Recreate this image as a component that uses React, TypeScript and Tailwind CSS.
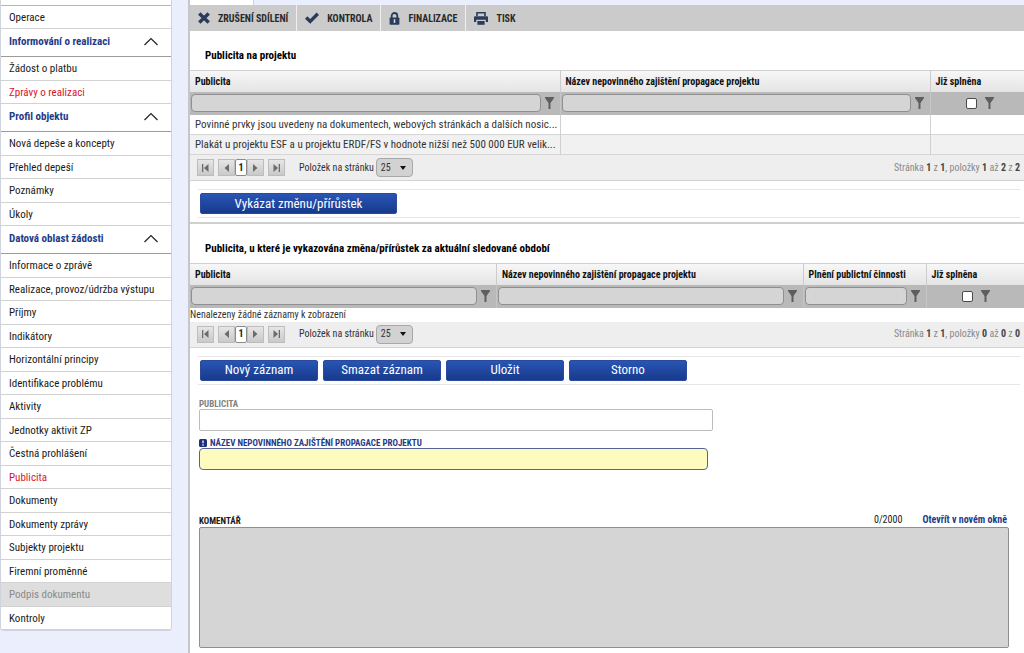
import type { ReactNode } from "react";

type NavItem = { label: string; state?: "active" | "disabled" };
type NavGroup = { title: string; items: NavItem[] };

const groups: NavGroup[] = [
  {
    title: "Informování o realizaci",
    items: [{ label: "Žádost o platbu" }, { label: "Zprávy o realizaci", state: "active" }],
  },
  {
    title: "Profil objektu",
    items: [
      { label: "Nová depeše a koncepty" },
      { label: "Přehled depeší" },
      { label: "Poznámky" },
      { label: "Úkoly" },
    ],
  },
  {
    title: "Datová oblast žádosti",
    items: [
      { label: "Informace o zprávě" },
      { label: "Realizace, provoz/údržba výstupu" },
      { label: "Příjmy" },
      { label: "Indikátory" },
      { label: "Horizontální principy" },
      { label: "Identifikace problému" },
      { label: "Aktivity" },
      { label: "Jednotky aktivit ZP" },
      { label: "Čestná prohlášení" },
      { label: "Publicita", state: "active" },
      { label: "Dokumenty" },
      { label: "Dokumenty zprávy" },
      { label: "Subjekty projektu" },
      { label: "Firemní proměnné" },
      { label: "Podpis dokumentu", state: "disabled" },
      { label: "Kontroly" },
    ],
  },
];

const navColors = {
  normal: "text-[#1a1a1a]",
  active: "text-[#d9142b]",
  disabled: "bg-[#dedede] text-[#8a8a8a]",
};

function NavLink({ label, state }: NavItem) {
  return (
    <li className="h-[23px] border-b border-[#d2d2d2] odd:h-6">
      <a href="#" className={`flex h-full items-center whitespace-nowrap pl-2 pt-px ${navColors[state ?? "normal"]}`}>
        {label}
      </a>
    </li>
  );
}

function Sidebar() {
  return (
    <nav className="w-[172px] shrink-0 self-start rounded-b border-x border-b border-[#cfd3dd] bg-white text-[11px] leading-4">
      <div className="h-[6px] border-b border-[#b5b5b5]" />
      <a href="#" className="flex h-[23px] items-center border-b border-[#d2d2d2] pl-2 pt-px text-[#1a1a1a]">
        Operace
      </a>
      {groups.map((group) => (
        <section key={group.title}>
          <button
            type="button"
            className="flex h-7 w-full items-center justify-between border-b border-[#9c9c9c] pb-0.5 pl-2 pr-3 font-bold text-[#1f3c88]"
          >
            {group.title}
            <svg width="16" height="9" viewBox="0 0 16 9" fill="none" stroke="#222" strokeWidth="1.2">
              <path d="M1.5 8 8 1.5 14.5 8" />
            </svg>
          </button>
          <ul>
            {group.items.map((item) => (
              <NavLink key={item.label} {...item} />
            ))}
          </ul>
        </section>
      ))}
    </nav>
  );
}

const toolbar: { label: string; icon: ReactNode }[] = [
  {
    label: "ZRUŠENÍ SDÍLENÍ",
    icon: (
      <svg width="12" height="12" viewBox="0 0 12 12" fill="none" stroke="#2b3b5c" strokeWidth="3.4">
        <path d="M1.3 1.5 10.7 10.5M10.7 1.5 1.3 10.5" />
      </svg>
    ),
  },
  {
    label: "KONTROLA",
    icon: (
      <svg width="14" height="12" viewBox="0 0 14 12" fill="none" stroke="#2b3b5c" strokeWidth="3.4">
        <path d="M1.2 5.6 5.2 9.4 12.8 1.8" />
      </svg>
    ),
  },
  {
    label: "FINALIZACE",
    icon: (
      <svg width="11" height="13" viewBox="0 0 11 13">
        <path d="M2.7 6V3.8a2.8 2.8 0 0 1 5.6 0V6" fill="none" stroke="#2b3b5c" strokeWidth="1.8" />
        <rect x="0.6" y="5.4" width="9.8" height="7.4" rx="0.8" fill="#2b3b5c" />
        <path d="M5.5 7.3v3.6" stroke="#dfe3ea" strokeWidth="1.5" />
      </svg>
    ),
  },
  {
    label: "TISK",
    icon: (
      <svg width="14" height="13" viewBox="0 0 14 13">
        <path d="M3 4V.8h8V4" fill="none" stroke="#2b3b5c" strokeWidth="1.6" />
        <path d="M1 4.2h12a1 1 0 0 1 1 1V10h-2.2V7.8H2.2V10H0V5.2a1 1 0 0 1 1-1Z" fill="#2b3b5c" />
        <rect x="3.4" y="9" width="7.2" height="3.8" fill="#2b3b5c" />
      </svg>
    ),
  },
];

function Toolbar() {
  return (
    <div className="flex h-[26px] bg-[#cbcbcb]">
      {toolbar.map((item) => (
        <button
          key={item.label}
          type="button"
          className="flex items-center gap-2 border-r border-[#f0f0f0] px-2 text-[10px] font-bold text-[#2a2a2a] last:border-r-0"
        >
          {item.icon}
          {item.label}
        </button>
      ))}
    </div>
  );
}

function Funnel() {
  return (
    <svg className="shrink-0" width="9" height="12" viewBox="0 0 9 12" fill="#5e5e5e">
      <path d="M0 0h9v1L5.5 6v6h-2V6L0 1Z" />
    </svg>
  );
}

type Column = { title: string; width?: string; check?: boolean };

function Grid({ columns, rows }: { columns: Column[]; rows: string[] }) {
  return (
    <table className="w-full table-fixed border-collapse border-t border-[#cfcfcf]">
      <thead>
        <tr className="h-[21px] bg-linear-to-b from-[#f7f7f7] to-[#e4e4e4]">
          {columns.map((c) => (
            <th
              key={c.title}
              className={`whitespace-nowrap border-r border-[#cccccc] pb-0 pl-[5px] pr-0 pt-px text-left text-[10px] font-bold leading-4 text-[#111] last:border-r-0 ${c.width ?? ""}`}
            >
              {c.title}
            </th>
          ))}
        </tr>
        <tr className="h-[23px] bg-[#b9b9b9]">
          {columns.map((c) => (
            <td key={c.title} className="border-r border-[#c6c6c6] p-0 last:border-r-0">
              {c.check ? (
                <div className="flex items-center gap-2 pl-[35px]">
                  <input
                    type="checkbox"
                    aria-label={c.title}
                    className="size-[11px] appearance-none rounded-xs border border-[#4a4a4a] bg-white"
                  />
                  <Funnel />
                </div>
              ) : (
                <div className="flex items-center gap-1 pl-px pr-[6px]">
                  <input
                    type="text"
                    aria-label={c.title}
                    className="h-[18px] min-w-0 flex-1 rounded-sm border border-[#8f8f8f] bg-[#d5d5d5] px-1"
                  />
                  <Funnel />
                </div>
              )}
            </td>
          ))}
        </tr>
      </thead>
      {rows.length > 0 && (
        <tbody>
          {rows.map((row) => (
            <tr key={row} className="h-5 border-b border-[#d6d6d6] even:bg-[#f1f1f1]">
              {columns.map((c, i) => (
                <td
                  key={c.title}
                  className="whitespace-nowrap border-r border-[#d0d0d0] pb-0 pl-[5px] pr-0 pt-px text-[11px] leading-4 text-[#333] last:border-r-0"
                >
                  {i === 0 ? row : null}
                </td>
              ))}
            </tr>
          ))}
        </tbody>
      )}
    </table>
  );
}

const arrows = {
  first: "M1 0h1.3v8H1ZM7.5 0v8L3 4Z",
  prev: "M7 0v8L2.5 4Z",
  next: "M2 0v8l4.5-4Z",
  last: "M1.5 0v8L6 4ZM6.7 0H8v8H6.7Z",
};

function PageButton({ kind, label }: { kind: keyof typeof arrows; label: string }) {
  return (
    <button
      type="button"
      aria-label={label}
      className="flex size-[17px] items-center justify-center border border-[#bdbdbd] bg-linear-to-b from-[#e6e6e6] to-[#c9c9c9]"
    >
      <svg width="9" height="8" viewBox="0 0 9 8" fill="#6b6b6b">
        <path d={arrows[kind]} />
      </svg>
    </button>
  );
}

function Pager({ id, from, to, total }: { id: string; from: number; to: number; total: number }) {
  return (
    <div className="flex h-[26px] items-center border-b border-[#d3d3d3] bg-[#eeeeee] pl-[7px] pr-1 text-[10px] leading-4 text-[#333]">
      <PageButton kind="first" label="První" />
      <div className="ml-1 flex">
        <PageButton kind="prev" label="Předchozí" />
        <span className="flex h-[17px] w-3 items-center justify-center rounded-xs border border-[#8a8a8a] bg-white font-bold text-[#222]">1</span>
        <PageButton kind="next" label="Další" />
      </div>
      <div className="ml-1">
        <PageButton kind="last" label="Poslední" />
      </div>
      <label htmlFor={id} className="ml-3.5 mr-0.5">
        Položek na stránku
      </label>
      <div className="grid items-center">
        <select
          id={id}
          className="col-start-1 row-start-1 h-[19px] w-[37px] appearance-none rounded-sm border border-[#a8a8a8] bg-[#d2d2d2] pl-1"
        >
          <option>25</option>
        </select>
        <svg className="pointer-events-none col-start-1 row-start-1 mr-[7px] justify-self-end" width="6" height="4" viewBox="0 0 6 4" fill="#111">
          <path d="M0 0h6L3 4Z" />
        </svg>
      </div>
      <p className="ml-auto text-[#8a8a8a] [&>b]:text-[#444]">
        Stránka <b>1</b> z <b>1</b>, položky <b>{from}</b> až <b>{to}</b> z <b>{total}</b>
      </p>
    </div>
  );
}

function ActionBar({ labels, width }: { labels: string[]; width: string }) {
  return (
    <div className="ml-2 mr-1 mt-2 flex h-[29px] items-center gap-[5px] border-y border-[#e6e6e6] pl-0.5">
      {labels.map((label) => (
        <button
          key={label}
          type="button"
          className={`h-[21px] rounded-xs border border-[#2a4a9c] bg-linear-to-b from-[#2a55b5] to-[#173a8c] text-[13px] leading-4 text-white ${width}`}
        >
          {label}
        </button>
      ))}
    </div>
  );
}

export default function App() {
  return (
    <div className="flex min-h-screen bg-[#ebeefd] font-['Roboto_Condensed','Liberation_Sans_Narrow',Roboto,sans-serif] text-[#1a1a1a]">
      <Sidebar />
      <div className="ml-4 flex min-w-0 flex-1 flex-col border-l-2 border-[#c4c6cc]">
        <div className="flex h-[5px]">
          <div className="w-16 border-r border-[#cfd3dd] bg-white" />
        </div>
        <Toolbar />
        <main className="flex-1 bg-white">
          <section className="border-b-2 border-[#cfcfcf] pb-1">
            <h2 className="flex h-[39px] items-center pl-[15px] pt-2.5 text-[11px] font-bold leading-4 text-black">
              Publicita na projektu
            </h2>
            <Grid
              columns={[
                { title: "Publicita" },
                { title: "Název nepovinného zajištění propagace projektu" },
                { title: "Již splněna", width: "w-[94px]", check: true },
              ]}
              rows={[
                "Povinné prvky jsou uvedeny na dokumentech, webových stránkách a dalších nosic...",
                "Plakát u projektu ESF a u projektu ERDF/FS v hodnote nižší než 500 000 EUR velik...",
              ]}
            />
            <Pager id="page-size-project" from={1} to={2} total={2} />
            <ActionBar labels={["Vykázat změnu/přírůstek"]} width="w-[197px]" />
          </section>

          <section>
            <h2 className="flex h-[39px] items-center pl-[15px] pt-2.5 text-[11px] font-bold leading-4 text-black">
              Publicita, u které je vykazována změna/přírůstek za aktuální sledované období
            </h2>
            <Grid
              columns={[
                { title: "Publicita" },
                { title: "Název nepovinného zajištění propagace projektu" },
                { title: "Plnění publictní činnosti", width: "w-[123px]" },
                { title: "Již splněna", width: "w-[98px]", check: true },
              ]}
              rows={[]}
            />
            <p className="h-[14px] text-[10px] leading-[14px] text-[#333]">Nenalezeny žádné záznamy k zobrazení</p>
            <Pager id="page-size-period" from={0} to={0} total={0} />
            <ActionBar labels={["Nový záznam", "Smazat záznam", "Uložit", "Storno"]} width="w-[118px]" />
          </section>

          <form className="flex flex-col pb-[5px] pl-[9px] pr-[15px] pt-3.5 text-[9px] font-bold leading-[10px]">
            <label htmlFor="publicita" className="text-[#808080]">
              PUBLICITA
            </label>
            <input id="publicita" type="text" className="h-[22px] w-[514px] max-w-full rounded-xs border border-[#bcbcbc] bg-white px-1" />
            <label htmlFor="nazev" className="flex items-center gap-[3px] pt-[7px] text-[#1f3c88]">
              <svg width="8" height="8" viewBox="0 0 8 8">
                <rect width="8" height="8" rx="1.5" fill="#1a3275" />
                <path d="M4 1.5v2.8M4 5.3v1.4" stroke="#fff" strokeWidth="1.3" />
              </svg>
              NÁZEV NEPOVINNÉHO ZAJIŠTĚNÍ PROPAGACE PROJEKTU
            </label>
            <input id="nazev" type="text" className="h-[22px] w-[509px] max-w-full rounded-sm border border-[#56649a] bg-[#fdfbbd] px-1" />
            <div className="flex items-end pt-[43px]">
              <label htmlFor="komentar" className="mr-auto leading-3">
                KOMENTÁŘ
              </label>
              <span className="mr-5 text-[10px] font-normal leading-[14px]">0/2000</span>
              <a href="#" className="mr-0.5 text-[10px] leading-[14px] text-[#1f3c88]">
                Otevřít v novém okně
              </a>
            </div>
            <textarea id="komentar" className="h-[121px] resize-none rounded-xs border border-[#8f8f8f] bg-[#d5d5d5] p-1" />
          </form>
        </main>
      </div>
    </div>
  );
}
